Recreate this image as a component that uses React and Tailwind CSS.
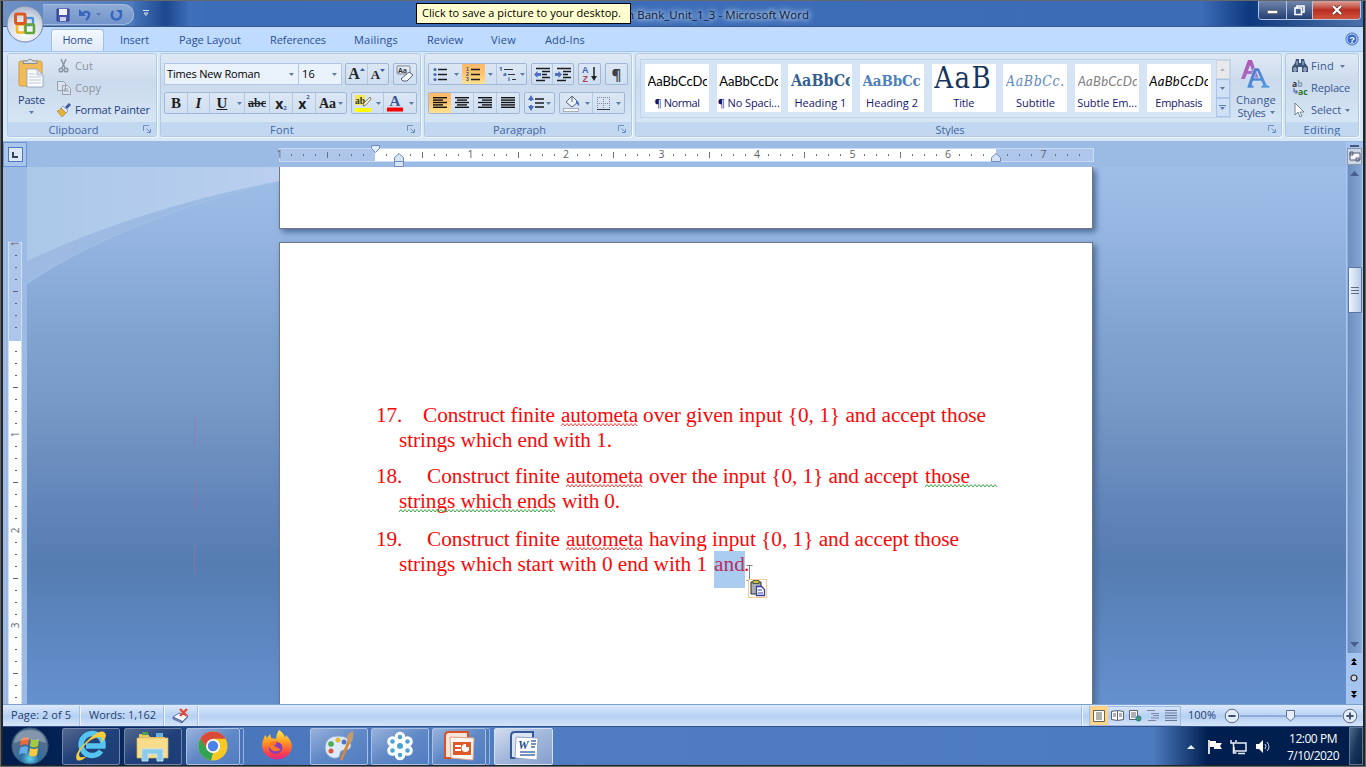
import React, { useLayoutEffect, useRef } from "react";

/* Text set to a given width by adjusting the letter spacing. */
function Fit({ w, className = "", children }) {
  const ref = useRef(null);
  useLayoutEffect(() => {
    const el = ref.current;
    el.style.letterSpacing = "0px";
    el.style.width = "auto";
    const natural = el.getBoundingClientRect().width;
    el.style.letterSpacing = (w - natural) / el.textContent.length + "px";
    el.style.width = w + "px";
  }, [w, children]);
  return (
    <span ref={ref} className={"inline-block shrink-0 whitespace-pre " + className}>
      {children}
    </span>
  );
}

function Down({ className = "" }) {
  return (
    <svg width="5" height="3" viewBox="0 0 5 3" className={"shrink-0 " + className}>
      <path d="M0 0h5L2.5 3z" fill="#5b7ba8" />
    </svg>
  );
}

function Group({ className, title, tw, launcher, children }) {
  return (
    <section className={"flex h-[84px] shrink-0 flex-col overflow-hidden rounded-[3px] border border-[#b4c9e2] bg-linear-to-b from-[#dfe9f5] from-0% via-[#cbdaec] via-35% to-[#dbeaf8] shadow-[1px_1px_0_#eef8ff] " + className}>
      <div className="flex h-[68px] shrink-0">{children}</div>
      <div className="flex h-[14px] items-center bg-[#c1d8f0] text-[#4566a2]">
        <div className="flex grow justify-center pt-px leading-[14px]">
          <Fit w={tw}>{title}</Fit>
        </div>
        {launcher && (
          <div className="w-[17px]">
            <svg width="9" height="9" viewBox="0 0 9 9" fill="none" stroke="#6f91bd" className="ml-1">
              <path d="M.5 6V.5H6M3.500 3.500l3.500 3.500M7.500 4v3.500H4" />
            </svg>
          </div>
        )}
      </div>
    </section>
  );
}

const box = "flex h-[22px] shrink-0 items-center rounded-[2px] border border-[#a0b7d8] bg-linear-to-b from-[#dce7f4] to-[#cfdff1] ";
const cell = "flex h-5 shrink-0 items-center justify-center ";

function Lines({ rows }) {
  return (
    <svg width="16" height="14" viewBox="0 0 16 14">
      {rows.map(([x, w], i) => (
        <rect key={i} x={x} y={1 + i * 2.4} width={w} height="1.4" fill="#101216" />
      ))}
    </svg>
  );
}

const full = [[1, 14], [1, 14], [1, 14], [1, 14], [1, 14]];
const left = [[1, 14], [1, 10], [1, 14], [1, 10], [1, 14]];
const center = [[1, 14], [3, 10], [1, 14], [3, 10], [1, 14]];
const right = [[1, 14], [5, 10], [1, 14], [5, 10], [1, 14]];

function ListIcon({ numbered }) {
  return (
    <svg width="15" height="15" viewBox="0 0 15 15">
      {[2, 7, 12].map((y, i) =>
        numbered ? (
          <text key={y} x="0" y={y + 2.3} fontSize="5" fontWeight="bold" fill="#294f93" fontFamily="Liberation Sans">{i + 1}</text>
        ) : (
          <circle key={y} cx="2" cy={y + 0.5} r="1.6" fill="#4c6cb0" />
        )
      )}
      <path d="M5 2.500h9M5 7.500h9M5 12.500h9" stroke="#1c1d20" strokeWidth="1.300" />
    </svg>
  );
}

function IndentIcon({ into }) {
  return (
    <svg width="17" height="15" viewBox="0 0 17 15">
      <path d="M2 1.500h14M8 4.500h8M8 7.500h5M8 10.500h8M2 13.500h9" stroke="#1b1c20" strokeWidth="1.600" />
      {into ? <path d="M7 7.500 3.500 4v2H0v3h3.500v2z" fill="#4c6fc0" /> : <path d="M0 7.500 3.500 4v2H7v3H3.500v2z" fill="#4c6fc0" />}
    </svg>
  );
}

function Clipboard() {
  return (
    <Group className="w-[150px]" title="Clipboard" tw={50} launcher>
      <div className="flex w-[47px] flex-col items-center pt-1">
        <svg width="28" height="31" viewBox="0 0 28 31">
          <rect x="1" y="3" width="23" height="25" rx="2" fill="#f0bb58" stroke="#cf9a40" />
          <path d="M5 5.500V3h4q3-3.500 6 0h4v2.500z" fill="#d8dde4" stroke="#747b87" strokeWidth=".8" />
          <path d="M9 11h10l6 6v12H9z" fill="#fbfdff" stroke="#8d9cb8" strokeWidth=".8" />
          <path d="M19 11v6h6zM11 16h6M11 19h12M11 22h12M11 25h12" fill="#dbe4f1" stroke="#a7b7d0" strokeWidth=".8" />
        </svg>
        <Fit w={27} className="mt-0.5 leading-[18px] text-[#1c3e7c]">Paste</Fit>
        <Down className="mt-[2px]" />
      </div>
      <div className="flex flex-col pt-px pl-0.5">
        <div className="flex h-[22px] items-center gap-1 text-[#8d939c]">
          <svg width="14" height="16" viewBox="0 0 14 16" fill="none" stroke="#8d95a2" strokeWidth="1.500">
            <path d="M4 1l4 9M9 1L5 10" /><circle cx="4" cy="12" r="1.800" /><circle cx="9" cy="12" r="1.800" />
          </svg>
          <Fit w={18}>Cut</Fit>
        </div>
        <div className="flex h-[22px] items-center gap-1 text-[#8d939c]">
          <svg width="14" height="14" viewBox="0 0 14 14" fill="#dde3ec" stroke="#98a2b2">
            <path d="M.5.500h6l2 2v7h-8zM5.500 4.500h5l3 3v6h-8zM7 8h4M7 10h5" />
          </svg>
          <Fit w={26}>Copy</Fit>
        </div>
        <div className="flex h-[22px] items-center gap-1 text-[#1c3e7c]">
          <svg width="14" height="14" viewBox="0 0 14 14">
            <path d="M12 0l2 2-4 4-2-2z" fill="#41569b" />
            <path d="M6 3l5 5-2 2-5-5z" fill="#e3e5f0" stroke="#6c739a" strokeWidth=".6" />
            <path d="M4 5l5 5-4 4-5-6q3 0 4-3z" fill="#e4b43b" stroke="#a87a1c" strokeWidth=".6" />
          </svg>
          <Fit w={75}>Format Painter</Fit>
        </div>
      </div>
    </Group>
  );
}

function FontGroup() {
  return (
    <Group className="w-[261px]" title="Font" tw={24} launcher>
      <div className="flex flex-col gap-[7px] pt-[9px] pl-[3px]">
        <div className="flex">
          <div className="flex h-[22px] w-[135px] items-center border border-[#b0c8e6] bg-[#eaf2fb] pr-1 pl-[2px] text-black">
            <Fit w={93}>Times New Roman</Fit><span className="grow" /><Down />
          </div>
          <div className="flex h-[22px] w-[43px] items-center border border-l-0 border-[#b0c8e6] bg-[#eaf2fb] pr-1 pl-[3px] text-black">
            <Fit w={13}>16</Fit><span className="grow" /><Down />
          </div>
          <div className={box + "ml-[3px] w-[44px] font-['Liberation_Serif',serif] font-bold text-[#23262c]"}>
            <div className={cell + "w-[22px] border-r border-[#b5c8e2] text-[16px]"}>A<svg width="5" height="14" viewBox="0 0 5 14"><path d="M0 4h5L2.500 1z" fill="#3c5fa8" /></svg></div>
            <div className={cell + "w-5 pt-0.5 text-[13px]"}>A<svg width="5" height="14" viewBox="0 0 5 14"><path d="M0 1h5L2.500 4z" fill="#3c5fa8" /></svg></div>
          </div>
          <div className={box + "ml-1 w-6 justify-center"}>
            <svg width="18" height="18" viewBox="0 0 18 18">
              <rect x="1" y="1" width="13" height="8" rx="1" fill="#e8edf5" stroke="#7b8796" />
              <text x="2" y="7.500" fontSize="7" fontWeight="bold" fill="#2c3340" fontFamily="Open Sans">Aa</text>
              <path d="M13 7l4 3-6 6H7l-2-2z" fill="#f8f9fb" stroke="#586070" />
            </svg>
          </div>
        </div>
        <div className="flex">
          <div className={box + "w-[183px] font-['Liberation_Serif',serif] text-[15px] font-bold text-[#1d1f24]"}>
            <div className={cell + "w-[23px] border-r border-[#b5c8e2]"}>B</div>
            <div className={cell + "w-[22px] border-r border-[#b5c8e2] italic"}>I</div>
            <div className={cell + "w-[24px] underline"}>U</div>
            <div className={cell + "w-[11px] border-r border-[#b5c8e2]"}><Down /></div>
            <div className={cell + "w-[25px] border-r border-[#b5c8e2] text-[12px] line-through"}>abc</div>
            <div className={cell + "w-[23px] border-r border-[#b5c8e2] font-['Open_Sans',sans-serif] text-[14px]"}>x<span className="self-end text-[6px] text-[#3c5fa8]">2</span></div>
            <div className={cell + "w-[23px] border-r border-[#b5c8e2] font-['Open_Sans',sans-serif] text-[14px]"}>x<span className="self-start text-[6px] text-[#3c5fa8]">2</span></div>
            <div className={cell + "w-[30px] gap-0.5 text-[14px]"}>Aa<Down /></div>
          </div>
          <div className={box + "ml-1 w-[66px]"}>
            <div className={cell + "w-[22px]"}>
              <svg width="17" height="17" viewBox="0 0 17 17">
                <rect x="0" y="0" width="10" height="10" fill="#f5e850" />
                <text x="0" y="8.500" fontSize="9.500" fontWeight="bold" fill="#30343b" fontFamily="Liberation Serif">ab</text>
                <path d="M15 2l1 2-5 6-3 1 1-3z" fill="#f7f0d8" stroke="#6a6455" strokeWidth=".8" />
                <rect x="0" y="13" width="16" height="4" fill="#ff0" />
              </svg>
            </div>
            <div className={cell + "w-[10px] border-r border-[#b5c8e2]"}><Down /></div>
            <div className={cell + "w-[22px]"}>
              <svg width="16" height="18" viewBox="0 0 16 18">
                <text x="2.500" y="12" fontSize="15" fontWeight="bold" fill="#3a5795" fontFamily="Liberation Serif">A</text>
                <rect x="0" y="13.500" width="16" height="4" fill="#f00" />
              </svg>
            </div>
            <div className={cell + "w-[10px]"}><Down /></div>
          </div>
        </div>
      </div>
    </Group>
  );
}

function ParagraphGroup() {
  const on = "bg-linear-to-b from-[#fbb96a] via-[#fdc36e] to-[#ffe391] ";
  return (
    <Group className="w-[208px]" title="Paragraph" tw={53} launcher>
      <div className="flex flex-col gap-[7px] pt-[9px] pl-[3px]">
        <div className="flex gap-1">
          <div className={box + "w-[99px]"}>
            <div className={cell + "w-[22px]"}><ListIcon /></div>
            <div className={cell + "w-[11px]"}><Down /></div>
            <div className={cell + on + "w-[23px]"}><ListIcon numbered /></div>
            <div className={cell + "w-[12px] border-r border-[#b5c8e2]"}><Down /></div>
            <div className={cell + "w-[21px]"}>
              <svg width="17" height="16" viewBox="0 0 17 16">
                <path d="M5 3.500h9M9 8.500h7M13 13.500h4" stroke="#333" strokeWidth="1.200" />
                <g fontSize="6" fontWeight="bold" fill="#294f93" fontFamily="Open Sans"><text x="0" y="5">1</text><text x="4" y="10">a</text><text x="9" y="15">i</text></g>
              </svg>
            </div>
            <div className={cell + "w-[8px]"}><Down /></div>
          </div>
          <div className={box + "w-[43px]"}>
            <div className={cell + "w-[21px] border-r border-[#b5c8e2]"}><IndentIcon /></div>
            <div className={cell + "w-[20px]"}><IndentIcon into /></div>
          </div>
          <div className={box + "w-[23px] justify-center"}>
            <svg width="17" height="18" viewBox="0 0 17 18">
              <g fontSize="9" fontWeight="bold" fontFamily="Liberation Sans"><text x="1" y="8" fill="#4263a9">A</text><text x="1.500" y="16.500" fill="#ad4250">Z</text></g>
              <path d="M13 2v12" stroke="#222" strokeWidth="1.500" /><path d="M10 11h6l-3 5z" fill="#222" />
            </svg>
          </div>
          <div className={box + "w-[23px] justify-center text-[15px] font-bold text-[#3d4148]"}>¶</div>
        </div>
        <div className="flex gap-1">
          <div className={box + "w-[92px]"}>
            <div className={cell + on + "w-[22px]"}><Lines rows={left} /></div>
            <div className={cell + "w-[23px] border-r border-[#b5c8e2]"}><Lines rows={center} /></div>
            <div className={cell + "w-[23px] border-r border-[#b5c8e2]"}><Lines rows={right} /></div>
            <div className={cell + "w-[22px]"}><Lines rows={full} /></div>
          </div>
          <div className={box + "w-[31px] justify-center gap-px"}>
            <svg width="17" height="16" viewBox="0 0 17 16">
              <path d="M3 3v3M3 10v3" stroke="#4c6fc0" strokeWidth="2" /><path d="M0 5 3 0l3 5zM0 11l3 5 3-5z" fill="#4c6fc0" />
              <path d="M7 4h9M7 8h9M7 12h9" stroke="#1b1c20" strokeWidth="1.500" />
            </svg>
            <Down />
          </div>
          <div className={box + "w-[66px]"}>
            <div className={cell + "w-[23px]"}>
              <svg width="17" height="17" viewBox="0 0 17 17">
                <path d="M3 7l6-6 6 6-6 5z" fill="#eef2f8" stroke="#5c6677" /><path d="M9 1v6" stroke="#5c6677" />
                <path d="M13 5q4 2 3 6l-3-3z" fill="#4e75b5" /><rect x="0.500" y="13.500" width="15" height="3" fill="#f4f5f8" stroke="#8f98a6" strokeWidth=".7" />
              </svg>
            </div>
            <div className={cell + "w-[10px] border-r border-[#b5c8e2]"}><Down /></div>
            <div className={cell + "w-[21px]"}>
              <svg width="13" height="13" viewBox="0 0 13 13" fill="none">
                <path d="M.5 0v13M6.500 0v13M12.500 0v13M0 .5h13M0 6.500h13" stroke="#7884a0" strokeDasharray="1 1" /><path d="M0 12.500h13" stroke="#343a46" />
              </svg>
            </div>
            <div className={cell + "w-[9px]"}><Down /></div>
          </div>
        </div>
      </div>
    </Group>
  );
}

const slab = "font-['DejaVu_Serif_Condensed','DejaVu_Serif',serif] ";
const plain = "font-['Lato','Open_Sans',sans-serif] text-[13px] ";
const styles = [
  ["AaBbCcDc", 61, plain + "text-black", "¶ Normal", 45],
  ["AaBbCcDc", 61, plain + "text-black", "¶ No Spaci...", 62],
  ["AaBbCc", 63, slab + "text-[16px] font-bold text-[#365f91]", "Heading 1", 52],
  ["AaBbCc", 58, slab + "text-[15px] font-bold text-[#4f81bd]", "Heading 2", 52],
  ["AaB", 58, slab + "text-[29px] text-[#17365d]", "Title", 21],
  ["AaBbCc.", 59, slab + "text-[14px] italic text-[#5f8ac1]", "Subtitle", 39],
  ["AaBbCcDc", 61, plain + "italic text-[#808080]", "Subtle Em...", 60],
  ["AaBbCcDc", 61, plain + "italic text-black", "Emphasis", 47],
];

function StylesGroup() {
  return (
    <Group className="w-[647px]" title="Styles" tw={29} launcher>
      <div className="mt-[5px] ml-1 flex h-[59px] w-[591px] border border-[#bdd3ee] bg-[#d6e5f6]">
        <div className="flex gap-[7.7px] pt-1 pl-1">
          {styles.map(([sample, w, cls, name, nw], i) => (
            <div key={i} className="flex h-12 w-16 flex-col items-center overflow-hidden bg-white">
              <div className={"flex h-[31px] w-[59px] shrink-0 items-center overflow-hidden " + (name === "Title" ? "pb-1" : "pt-0.5")}>
                <Fit w={w} className={"leading-[28px] " + cls}>{sample}</Fit>
              </div>
              <Fit w={nw} className="leading-[16px] text-[#15156c]">{name}</Fit>
            </div>
          ))}
        </div>
        <div className="ml-[5px] flex flex-col">
          <div className="flex h-[19px] w-[14px] items-center justify-center border border-[#cfd5dc] bg-[#e7e9ed]"><svg width="5" height="3" viewBox="0 0 5 3"><path d="M0 3h5L2.500 0z" fill="#aeb4bd" /></svg></div>
          <div className="flex h-[19px] w-[14px] items-center justify-center border border-[#a9c5ea] bg-[#d0e1f7]"><Down /></div>
          <div className="flex h-[19px] w-[14px] flex-col items-center justify-center gap-px border border-[#a9c5ea] bg-[#d0e1f7]"><span className="h-px w-[7px] bg-[#5b7ba8]" /><Down /></div>
        </div>
      </div>
      <div className="flex w-[49px] flex-col items-center pt-[5px] pl-px text-[#36568f]">
        <svg width="32" height="30" viewBox="0 0 32 30">
          <defs><linearGradient id="ca" x2="1" y2="1"><stop stopColor="#b448a5" /><stop offset="1" stopColor="#9c85d6" /></linearGradient><linearGradient id="cb" x2="1" y2="1"><stop stopColor="#4f6fc9" /><stop offset="1" stopColor="#54a3e4" /></linearGradient></defs>
          <path d="M1 20 8 1h4l7 19h-4l-2-5H7l-2 5zM8 12h4l-2-6z" fill="url(#ca)" fillRule="evenodd" />
          <path d="M7 28l7-19h5l8 17 3 1v2h-9v-2l2-1-2-4h-8l-1 4 2 1v2H7zM14 19h6l-3-7z" fill="url(#cb)" stroke="#e4ecf8" strokeWidth=".5" fillRule="evenodd" />
        </svg>
        <Fit w={40} className="mt-[4px] leading-[13px]">Change</Fit>
        <div className="flex items-center gap-1 leading-[13px]"><Fit w={28}>Styles</Fit><Down /></div>
      </div>
    </Group>
  );
}

function Editing() {
  return (
    <Group className="w-[74px]" title="Editing" tw={37}>
      <div className="flex flex-col pt-px pl-1.5 text-[#36568f]">
        <div className="flex h-[22px] items-center">
          <svg width="16" height="14" viewBox="0 0 16 14" className="mr-[3px]" fill="#3d5378"><path d="M4 0h3v4h2V0h3l1 4 3 4v5h-6V8H6v5H0V8l3-4z" /><path d="M2 9h2v3H2zM12 9h2v3h-2zM5 2v4M11 2v4" stroke="#d7e3f3" strokeWidth=".8" /></svg>
          <Fit w={23}>Find</Fit><Down className="ml-[6px]" />
        </div>
        <div className="flex h-[22px] items-center">
          <svg width="17" height="16" viewBox="0 0 17 16" className="mr-[2px]"><g fontSize="8.500" fontWeight="bold" fontFamily="Open Sans"><text x="0" y="6.800" fill="#2b3140">a<tspan fill="#8f98a8">b</tspan></text><text x="6" y="15" fill="#26752b">ac</text></g><path d="M2 8v4h3M3.500 10l2 2-2 2" fill="none" stroke="#3d5a9b" /></svg>
          <Fit w={39}>Replace</Fit>
        </div>
        <div className="flex h-[22px] items-center">
          <svg width="11" height="15" viewBox="0 0 11 15" className="mr-[6px] ml-[2px]"><path d="M1 0v12l3-3 2 5 2-1-2-4h4z" fill="#fff" stroke="#69778d" strokeWidth=".9" /></svg>
          <Fit w={30}>Select</Fit><Down className="ml-[4px]" />
        </div>
      </div>
    </Group>
  );
}

function Orb() {
  return (
    <svg width="38" height="38" viewBox="0 0 38 38" className="absolute top-[4px] left-[3px]">
      <defs><radialGradient id="orb" cx=".5" cy=".75" r=".75"><stop stopColor="#fff" /><stop offset=".65" stopColor="#d6dce7" /><stop offset="1" stopColor="#a3b2cb" /></radialGradient></defs>
      <circle cx="19" cy="19" r="18" fill="url(#orb)" stroke="#7288ae" />
      <g fill="none">
        <rect x="19.500" y="13" width="7.500" height="7" rx="1" stroke="#4d91d9" strokeWidth="2.400" />
        <rect x="11" y="19.500" width="8" height="8" rx="1" stroke="#f3b72a" strokeWidth="2.600" />
        <rect x="19.500" y="19.500" width="8.500" height="8.500" rx="1" stroke="#62a53b" strokeWidth="2.600" />
        <rect x="9.500" y="9" width="9.500" height="9.500" rx="1.500" stroke="#dc5a22" strokeWidth="3" />
      </g>
    </svg>
  );
}

function TitleBar() {
  return (
    <header className="relative flex h-[26px] shrink-0 items-start border-b border-[#3a5788] bg-linear-to-r from-[#6e90c6] from-0% via-[#3c6db8] via-15% to-[#3c6cb6]">
      <div className="mt-[3px] ml-[40px] flex h-[21px] w-[91px] items-center rounded-r-[10px] border border-l-0 border-[#a4bbdd] bg-linear-to-b from-[#8fabd6] to-[#7194ca] pl-[13px]">
        <svg width="14" height="14" viewBox="0 0 14 14"><path d="M1 1h12v12H1z" fill="#4854ac" stroke="#323c8d" /><path d="M3 1h8v6H3z" fill="#eff3fb" /><path d="M4 9h6v4H4z" fill="#cbd2e8" /></svg>
        <svg width="13" height="12" viewBox="0 0 13 12" className="ml-2"><path d="M4 5q4-4 7-1 1 3-3 7" fill="none" stroke="#3866bc" strokeWidth="2.400" /><path d="M1 0v7h7z" fill="#3866bc" /></svg>
        <Down className="ml-[5px]" />
        <svg width="13" height="12" viewBox="0 0 13 12" className="ml-[9px]"><path d="M3 2q-3 5 1 8 5 2 7-3V3" fill="none" stroke="#3866bc" strokeWidth="2.400" /><path d="M6 1h6v5z" fill="#3866bc" /></svg>
      </div>
      <div className="flex h-[25px] w-[32px] items-center bg-linear-to-r from-[#4473b8] to-[#1c488d] pl-[9px]">
        <svg width="6" height="7" viewBox="0 0 6 7" fill="none" stroke="#d4e2f6"><path d="M0 .5h6M1 3h4L3 5.500z" /></svg>
      </div>
      <div className="h-[25px] w-[22px] bg-linear-to-r from-[#1c488d] to-[#3c6cb6]" />
      <div className="ml-[439px] flex h-[25px] items-center pt-[3px] text-[#0d1c33] [text-shadow:0_0_5px_#dce8fa,0_0_7px_#b9cef0,0_0_9px_#9bb9e8]">
        <Fit w={182} className="text-[11.500px]">n Bank_Unit_1_3 - Microsoft Word</Fit>
      </div>
      <span className="grow" />
      <div className="flex h-[25px] bg-linear-to-r from-[#3c6cb6] via-[#0c397e] via-30% to-[#4b70a8] pl-[56px]">
        <div className="flex h-[19px] overflow-hidden rounded-b-[4px] border border-t-0 border-[#b5c6e0]">
          <div className="flex w-[28px] items-center justify-center border-r border-[#b5c6e0] bg-linear-to-b from-[#7286ab] to-[#233f72]"><span className="mt-1 h-[4px] w-[11px] border border-[#777] bg-white" /></div>
          <div className="flex w-[25px] items-center justify-center bg-linear-to-b from-[#7286ab] to-[#233f72]">
            <svg width="11" height="11" viewBox="0 0 11 11" fill="none" stroke="#fff" strokeWidth="1.600"><path d="M3 3V1h7v6H8" /><rect x="1" y="3" width="6.500" height="6.500" /></svg>
          </div>
          <div className="flex w-[48px] items-center justify-center border-l border-[#b5c6e0] bg-linear-to-b from-[#d9a19b] via-[#b92b1f] via-50% to-[#d0543d]">
            <svg width="12" height="10" viewBox="0 0 12 10"><path d="M2 1l8 8M10 1L2 9" stroke="#553033" strokeWidth="3.500" /><path d="M2 1l8 8M10 1L2 9" stroke="#fff" strokeWidth="2.200" /></svg>
          </div>
        </div>
      </div>
      <span className="w-[2px]" />
    </header>
  );
}

const tabs = [["Insert", 29, "ml-[16px]"], ["Page Layout", 62, "ml-[30px]"], ["References", 56, "ml-[29px]"], ["Mailings", 44, "ml-[28px]"], ["Review", 36, "ml-[29px]"], ["View", 25, "ml-[28px]"], ["Add-Ins", 40, "ml-[29px]"]];

function Tabs() {
  return (
    <nav className="flex h-6 shrink-0 items-center bg-[#bfdbff] text-[#2c4f94]">
      <div className="ml-[48px] flex h-[22px] w-[53px] items-center justify-center self-end rounded-t-[3px] border border-b-0 border-[#9fc0ec] bg-linear-to-b from-[#f4f9ff] to-[#dfeaf7]"><Fit w={30}>Home</Fit></div>
      {tabs.map(([t, w, m]) => <Fit key={t} w={w} className={"pt-[3px] " + m}>{t}</Fit>)}
      <span className="grow" />
      <svg width="14" height="14" viewBox="0 0 14 14" className="mr-[4px]"><circle cx="7" cy="7" r="6.200" fill="#3568c9" stroke="#7395ce" /><circle cx="7" cy="7" r="5" fill="none" stroke="#e7f0ff" strokeWidth=".8" /><text x="4.300" y="10.500" fontSize="9.500" fontWeight="bold" fill="#fff" fontFamily="Liberation Sans">?</text></svg>
    </nav>
  );
}

const hTicks = Array.from({ length: 68 }, (_, i) => i - 8);
const vTicks = Array.from({ length: 39 }, (_, i) => i - 8);

function HRuler() {
  return (
    <div className="relative flex h-[25px] grow items-center">
      <div className="relative ml-[252px] h-[14px] w-[815px] border border-[#c8dbf5] bg-[#adc6e9]">
        <div className="ml-[95px] h-3 w-[621px] bg-white" />
        <div className="absolute top-0 -left-[6.500px] flex h-3 items-center text-[10.500px] text-[#59616e]">
          {hTicks.map((n) => (
            <span key={n} className="flex w-[11.950px] items-center justify-center">
              {n === 0 || n === 52 ? null : n % 8 === 0 ? Math.abs(n / 8) : n % 4 === 0 ? <i className="h-[6px] w-px bg-[#6c7484]" /> : <i className="h-[2px] w-px bg-[#6c7484]" />}
            </span>
          ))}
        </div>
        <svg width="9" height="8" viewBox="0 0 9 8" className="absolute -top-[4px] left-[91px]"><path d="M.5.500h8v3l-4 4-4-4z" fill="#e2ebf8" stroke="#718cb9" /></svg>
        <svg width="10" height="15" viewBox="0 0 10 15" className="absolute top-[4px] left-[114px]"><path d="M.5 8.500V4.500l4.500-4 4.500 4v4zM.5 8.500h9v5h-9z" fill="#d6e4f7" stroke="#718cb9" /></svg>
        <svg width="10" height="9" viewBox="0 0 10 9" className="absolute top-[4px] left-[711px]"><path d="M.5 8.500V4.500l4.500-4 4.500 4v4z" fill="#d6e4f7" stroke="#718cb9" /></svg>
      </div>
    </div>
  );
}

function VRuler() {
  return (
    <div className="flex w-6 shrink-0 flex-col overflow-hidden bg-[#9cbbe4] pt-[75px] pl-[5px]">
      <div className="relative h-[470px] w-[14px] shrink-0 border border-[#cfe0f8] bg-[#adc6e9]">
        <div className="mt-[98px] h-[368px] w-3 bg-white" />
        <div className="absolute -top-[5px] left-[0.500px] flex w-3 flex-col items-center text-[10px] text-[#59616e]">
          {vTicks.map((n) => (
            <span key={n} className="flex h-[11.950px] shrink-0 items-center justify-center">
              {n === 0 ? null : n % 8 === 0 ? <b className="-rotate-90 font-normal">{Math.abs(n / 8)}</b> : n % 4 === 0 ? <i className="h-px w-[5px] bg-[#5a6170]" /> : <i className="h-px w-[2px] bg-[#5a6170]" />}
            </span>
          ))}
        </div>
      </div>
    </div>
  );
}

function Squiggle({ w, color }) {
  let d = "M0 3";
  for (let x = 2; x <= w; x += 2) d += `L${x} ${x % 4 ? 0.5 : 3}`;
  return <svg width={w} height="4" viewBox={`0 0 ${w} 4`} className="absolute top-[20px] left-0"><path d={d} fill="none" stroke={color} strokeWidth=".9" /></svg>;
}

function Marked({ w, line = w, color = "#e33", children }) {
  return <span className="relative inline-block h-[25px] shrink-0"><Fit w={w}>{children}</Fit><Squiggle w={line} color={color} /></span>;
}

const green = "#2f9a3c";

function Questions() {
  return (
    <div className="flex flex-col pt-[160px] pl-[96px] font-['Liberation_Serif',serif] text-[21.300px] leading-[25px] text-[#fb0808]">
      <div>
        <div className="flex h-[25px]"><Fit w={26}>17.</Fit><Fit w={132} className="ml-[21px]">Construct finite</Fit><span className="w-[6px]" /><Marked w={77}>autometa</Marked><Fit w={343} className="ml-[5px]">over given input {"{0, 1}"} and accept those</Fit></div>
        <div className="flex h-[25px] pl-[23px]"><Fit w={213}>strings which end with 1.</Fit></div>
      </div>
      <div className="mt-[11px]">
        <div className="flex h-[25px]"><Fit w={26}>18.</Fit><Fit w={133} className="ml-[25px]">Construct finite</Fit><span className="w-[6px]" /><Marked w={77}>autometa</Marked><Fit w={269} className="ml-[6px]">over the input {"{0, 1}"} and accept</Fit><span className="w-[7px]" /><Marked w={45} line={72} color={green}>those</Marked></div>
        <div className="flex h-[25px] pl-[23px]"><Marked w={157} color={green}>strings which ends</Marked><Fit w={58} className="ml-[6px]">with 0.</Fit></div>
      </div>
      <div className="mt-[13px]">
        <div className="flex h-[25px]"><Fit w={26}>19.</Fit><Fit w={133} className="ml-[25px]">Construct finite</Fit><span className="w-[6px]" /><Marked w={77}>autometa</Marked><Fit w={310} className="ml-[6px]">having input {"{0, 1}"} and accept those</Fit></div>
        <div className="flex h-[25px] pl-[23px]">
          <Fit w={308}>strings which start with 0 end with 1</Fit>
          <span className="relative -mt-px ml-[7px] flex h-[37px] w-[31px] bg-[#a9ccf0] leading-[27px] text-[#b63060]">
            <Fit w={31}>and</Fit>
            <svg width="21" height="39" viewBox="0 0 21 39" className="absolute top-[11px] left-[32px]">
              <path d="M.5 3.500h6M3.500 3.500v15M.5 18.500h6" fill="none" stroke="#7d8088" />
              <rect x="2.500" y="17.500" width="18" height="18" fill="#fff" stroke="#f9c98e" />
              <path d="M5 20h10v12H5z" fill="#a9adb2" stroke="#2a2c31" /><path d="M7 18.500h6v3H7z" fill="#cfc63a" stroke="#2a2c31" strokeWidth=".7" />
              <path d="M10.500 24.500h5l3 3v6h-8z" fill="#fff" stroke="#393d9c" strokeWidth="1.300" /><path d="M12 28h4M12 31h5" stroke="#393d9c" />
            </svg>
          </span>
          <span className="-ml-px">.</span>
        </div>
      </div>
    </div>
  );
}

function Canvas() {
  return (
    <main className="relative flex grow flex-col overflow-hidden bg-[linear-gradient(180deg,#9fbfe9_0,#95b5e0_13%,#80a3d0_31%,#7698c6_45%,#6083b8_65%,#557db2_74%,#6591cf_100%)] pl-[252px]">
      <svg width="252" height="120" viewBox="0 0 252 120" className="absolute top-0 left-0">
        <defs><linearGradient id="sw" x2="1"><stop stopColor="#abc8e9" /><stop offset="1" stopColor="#bacfef" /></linearGradient></defs>
        <path d="M0 0h252v14Q100 48 0 116z" fill="#9dbbe2" />
        <path d="M0 116Q100 50 252 14" fill="none" stroke="#a0bfe8" strokeWidth="1.500" />
        <path d="M0 0h252v14Q110 42 0 94z" fill="url(#sw)" />
      </svg>
      <div className="absolute top-[249px] left-[167px] flex flex-col gap-[33px]"><i className="h-[31px] w-px bg-[#a5709e]/60" /><i className="h-[31px] w-px bg-[#a5709e]/60" /><i className="h-[31px] w-px bg-[#a5709e]/60" /></div>
      <article className="h-[62px] w-[814px] shrink-0 border border-t-0 border-[#6e7580] bg-white shadow-[3px_3px_6px_#4a6a98]" />
      <article className="mt-[13px] h-[470px] w-[814px] shrink-0 border border-[#6e7580] bg-white shadow-[3px_3px_6px_#4a6a98]"><Questions /></article>
    </main>
  );
}

function ScrollBar() {
  return (
    <div className="flex w-[17px] shrink-0 flex-col items-center border-l border-[#a9c7ee] bg-[#a5c4f0] pt-[3px] pr-px">
      <span className="h-[2px] w-[9px] bg-[#47597c]" />
      <div className="mt-px flex h-[17px] w-[15px] items-center justify-center border border-[#8c97ab] bg-[#cdd6e5]">
        <svg width="12" height="12" viewBox="0 0 12 12" fill="#f5f5fb" stroke="#4f5b76"><path d="M1 2h10v7H1zM1 1h3v3H1zM7 7h3v3H7z" /></svg>
      </div>
      <div className="flex w-[15px] grow flex-col items-center border-x border-[#8fb0df] bg-linear-to-r from-[#6d8fc0] to-[#84a5d2] pt-[6px]">
        <svg width="9" height="5" viewBox="0 0 9 5"><path d="M0 5h9L4.500 0z" fill="#465f8c" /></svg>
        <div className="mt-[91px] flex h-[46px] w-[14px] shrink-0 flex-col items-center justify-center gap-[2px] rounded-[1px] border border-[#5d769f] bg-linear-to-r from-[#eef4fb] to-[#b4cbe9]">
          <i className="h-px w-2 bg-[#5f6c80]" /><i className="h-px w-2 bg-[#5f6c80]" /><i className="h-px w-2 bg-[#5f6c80]" />
        </div>
        <span className="grow" />
        <svg width="9" height="5" viewBox="0 0 9 5" className="mb-[6px]"><path d="M0 0h9L4.500 5z" fill="#465f8c" /></svg>
      </div>
      <div className="flex h-[51px] w-4 shrink-0 flex-col items-center justify-between bg-[#a5c4f0] pt-[5px] pr-px pb-[6px]">
        <svg width="6" height="7" viewBox="0 0 6 7"><path d="M0 3h6L3 0zM0 7h6L3 3z" /></svg>
        <svg width="8" height="8" viewBox="0 0 8 8"><circle cx="4" cy="4" r="3" fill="#d0d7e2" stroke="#222" strokeWidth="1.200" /></svg>
        <svg width="6" height="7" viewBox="0 0 6 7"><path d="M0 0h6L3 4zM0 4h6L3 7z" /></svg>
      </div>
    </div>
  );
}

function StatusBar() {
  const sep = "h-[20px] w-px bg-[#a4c0e8] shadow-[1px_0_0_#eaf3ff] ";
  const v = "flex h-[19px] w-[18px] items-center justify-center ";
  return (
    <footer className="flex h-[22px] shrink-0 items-center border-t border-[#7ca0d6] bg-linear-to-b from-[#dce9fb] from-0% via-[#b5d0f3] via-55% to-[#d5e5f9] text-[#24406f]">
      <Fit w={60} className="ml-2">Page: 2 of 5</Fit><span className={sep + "ml-[8px]"} />
      <Fit w={67} className="ml-[9px]">Words: 1,162</Fit><span className={sep + "ml-[7px]"} />
      <svg width="17" height="16" viewBox="0 0 17 16" className="ml-[8px]"><path d="M1 9l6-4 9 3-6 6z" fill="#f6f8fc" stroke="#6672a4" /><path d="M1 9v2l9 4v-2zM10 15l6-6" fill="#7b89bc" stroke="#4f5d98" strokeWidth=".7" /><path d="M8 1l7 7M15 1L8 8" stroke="#e34b34" strokeWidth="2.400" /></svg>
      <span className={sep + "ml-[8px]"} /><span className="grow" /><span className={sep + "mr-[7px]"} />
      <div className="flex h-5 items-center border border-[#9fbce6]">
        <div className={v + "bg-[#fbd389]"}><svg width="12" height="12" viewBox="0 0 12 12" fill="#fff" stroke="#6a6555"><path d="M.5.500h11v11H.5zM3 3h6M3 5h6M3 7h6M3 9h6" /></svg></div>
        <div className={v}><svg width="13" height="11" viewBox="0 0 13 11" fill="#fff" stroke="#58616f"><path d="M.5 1.500 6.500.500l6 1v8l-6 1-6-1zM6.500 1v9M2 4h3M2 6h3M8 4h3M8 6h3" /></svg></div>
        <div className={v}><svg width="13" height="12" viewBox="0 0 13 12" fill="#fff" stroke="#58616f"><path d="M.5.500h8v9h-8zM2 3h5M2 5h5M2 7h5" /><circle cx="9.500" cy="8.500" r="2.500" fill="#3d9b78" stroke="#32718b" /></svg></div>
        <div className={v}><svg width="13" height="11" viewBox="0 0 13 11" stroke="#7a869c"><path d="M0 .5h8M4 3.500h8M6 5.500h6M4 8h8M1 10.500h8" /></svg></div>
        <div className={v}><svg width="12" height="11" viewBox="0 0 12 11" stroke="#697791"><path d="M0 .5h12M0 3h12M0 5.500h12M0 8h12M0 10.500h12" /></svg></div>
      </div>
      <Fit w={28} className="ml-[7px]">100%</Fit>
      <svg width="136" height="18" viewBox="0 0 136 18" className="mr-[4px] ml-[7px]">
        <path d="M17 9h102" stroke="#6a87b9" />
        <g fill="#e2ebf8" stroke="#5a6985"><circle cx="9" cy="9" r="6.800" /><circle cx="127" cy="9" r="6.800" /></g>
        <path d="M5.500 9h7M123.500 9h7M127 5.500v7" stroke="#3e4d68" strokeWidth="1.800" />
        <path d="M63.500 3.500h8v7L67.500 14l-4-3.500z" fill="#e8effa" stroke="#5c7199" />
      </svg>
    </footer>
  );
}

const task = "flex h-[37px] shrink-0 items-center justify-center rounded-[2px] border ";
const pale = "border-[#a9c0e2] bg-linear-to-br from-[#98b2dc] via-[#6088c6] to-[#507dc1] ";
const dusk = "border-[#7085a8] bg-linear-to-br from-[#53688e] via-[#20407a] to-[#1c3d75] ";

function TaskBar() {
  return (
    <div className="flex h-[39px] shrink-0 items-center border-t border-[#34518a] bg-[linear-gradient(90deg,#001c4c_0,#0a2a60_150px,#4a76bb_240px,#507dc2_500px,#4d7bc0_1150px,#001f50_1205px,#001d4b_100%)]">
      <svg width="40" height="38" viewBox="0 0 40 38" className="ml-[7px]">
        <defs><radialGradient id="st" cx=".5" cy=".85"><stop stopColor="#61d5ee" /><stop offset=".5" stopColor="#2a6d9f" /><stop offset="1" stopColor="#526e8d" /></radialGradient></defs>
        <circle cx="20" cy="19" r="18" fill="url(#st)" stroke="#395b7d" />
        <path d="M11 12q4-3 8-1l-1 7q-5-2-8 1z" fill="#ed6936" /><path d="M21 12q4 2 8 0l-1 7q-4 3-8 0z" fill="#a3ca43" /><path d="M10 21q4-3 8-1l-1 7q-5-2-8 1z" fill="#64aee7" /><path d="M20 21q4 2 8 0l-1 7q-4 3-8 0z" fill="#fbc93b" />
        <path d="M4 16Q6 3 20 3t16 13Q20 9 4 16z" fill="#fff" opacity=".28" />
      </svg>
      <div className={task + dusk + "ml-[12px] w-[58px]"}>
        <svg width="32" height="34" viewBox="0 0 32 34"><path d="M26 22A11 11 0 1 1 28 17H11" fill="none" stroke="#55c4f0" strokeWidth="5.500" /><path d="M2 31Q-2 25 12 12T30 4q3 4-4 10 2-6-2-6-8 1-15 9T5 28q3 1 7-1-6 6-10 4z" fill="#f5cd3c" /></svg>
      </div>
      <div className={task + dusk + "ml-[4px] w-[58px]"}>
        <svg width="34" height="34" viewBox="0 0 34 34"><path d="M3 5h9l2 3h15v18H3z" fill="#e4c565" /><path d="M6 3h6v3H6z" fill="#45a255" /><path d="M20 4h7v4h-7z" fill="#6bb2da" /><path d="M1 9h31v20H1z" fill="#f6dc8b" stroke="#d8b55c" strokeWidth=".7" /><path d="M6 32V20h21v12h-6v-7h-9v7z" fill="#8ac9ea" stroke="#b9e4f6" /></svg>
      </div>
      <div className={task + pale + "ml-[4px] w-[54px]"}>
        <svg width="30" height="30" viewBox="0 0 30 30"><circle cx="15" cy="15" r="14.500" fill="#f9c926" /><path d="M2.400 7.800A14.500 14.500 0 0 1 27.600 7.800H15L9 19z" fill="#d94a38" /><path d="M2.400 7.800 9.200 18.500 15 22l-2 7.400A14.500 14.500 0 0 1 2.400 7.800z" fill="#31a352" /><circle cx="15" cy="15" r="7" fill="#fff" /><circle cx="15" cy="15" r="5.200" fill="#4a82e8" /></svg>
      </div>
      <span className="h-[37px] w-[4px] rounded-r-[2px] border border-l-0 border-[#96b3df]" />
      <div className="flex w-[66px] items-center justify-center">
        <svg width="32" height="34" viewBox="0 0 32 34">
          <defs><linearGradient id="ff" x1="1" y2="1"><stop stopColor="#fff04c" /><stop offset=".4" stopColor="#ff9b22" /><stop offset=".8" stopColor="#fa3d4e" /><stop offset="1" stopColor="#dd278b" /></linearGradient></defs>
          <path d="M18 1q5 3 6 8l1-3q6 6 6 12A15 14.500 0 1 1 3 9l1-3 2 3 3-4 1 4 5 1q0-5 3-9z" fill="url(#ff)" /><path d="M10 14q6-4 11 2 2 8-6 9-8-1-7-7 3 2 7-1-4 1-5-3z" fill="#8a3fb9" /><path d="M8 14q4-3 8-1-1 3-4 4 5 1 8 4-8 3-11-2z" fill="#ff7b23" />
        </svg>
      </div>
      <div className={task + pale + "w-[58px]"}>
        <svg width="34" height="34" viewBox="0 0 34 34"><path d="M3 18Q4 7 16 7q12 0 13 9 0 5-6 5-5 0-5 4 0 5-7 4-8-2-8-11z" fill="#dce9f7" stroke="#8ca9cd" /><circle cx="9" cy="15" r="2.800" fill="#54a657" /><circle cx="16" cy="11" r="2.500" fill="#e4b93a" /><circle cx="9" cy="22" r="2.500" fill="#d55a3f" /><circle cx="22" cy="13" r="2.500" fill="#5274c5" /><path d="M20 32l-2-2 8-19 3 1z" fill="#d48838" /><path d="M25 12q-1-8 6-10 1 7-2 12z" fill="#c69a6b" /></svg>
      </div>
      <div className={task + pale + "ml-[3px] w-[58px]"}>
        <svg width="30" height="32" viewBox="0 0 30 32" fill="#4aa3d7" stroke="#fff" strokeWidth="3"><circle cx="15" cy="7" r="3.800" /><circle cx="22.500" cy="11.500" r="3.800" /><circle cx="22.500" cy="20.500" r="3.800" /><circle cx="15" cy="25" r="3.800" /><circle cx="7.500" cy="20.500" r="3.800" /><circle cx="7.500" cy="11.500" r="3.800" /><circle cx="15" cy="16" r="4" strokeWidth="2" /></svg>
      </div>
      <div className={task + pale + "ml-[3px] w-[54px]"}>
        <svg width="32" height="34" viewBox="0 0 32 34"><path d="M2 29V7q0-4 4-4h19v6H9v20z" fill="#f8e5da" stroke="#d65126" strokeWidth="2" /><path d="M7 8l24 1-1 22-22-2z" fill="#fff7f2" stroke="#e2a58d" /><path d="M10 13h18v13H10z" fill="#df5a2b" /><path d="M12 16h6v2h-6zM12 20h6v2h-6z" fill="#fff" /><path d="M26 18h-3v-3a4 4 0 1 0 3 6z" fill="#fff" /></svg>
      </div>
      <span className="h-[37px] w-[4px] rounded-r-[2px] border border-l-0 border-[#96b3df]" />
      <div className={task + "ml-[4px] w-[59px] border-[#d5e1f2] bg-linear-to-br from-[#d3deee] via-[#a1b7da] to-[#879fce]"}>
        <svg width="32" height="34" viewBox="0 0 32 34"><path d="M3 29V7q0-4 4-4h18v6H9v20z" fill="#dbe5f4" stroke="#34579d" strokeWidth="2" /><path d="M8 8l22 1-1 22-22-2z" fill="#fff" stroke="#94a8cb" /><text x="10" y="20" fontSize="12" fontWeight="bold" fontStyle="italic" fill="#284b93" fontFamily="Liberation Serif">W</text><path d="M23 12h5M23 15h5M23 18h4M12 23h15M12 26h15" stroke="#4d6ca8" strokeWidth="1.600" /></svg>
      </div>
      <span className="grow" />
      <svg width="90" height="20" viewBox="0 0 90 20" className="mr-[13px]">
        <path d="M4 13h8L8 9z" fill="#e9f1fc" />
        <path d="M26 4v14" stroke="#eee" strokeWidth="1.800" /><path d="M27 5h6v2h6l-2 3 2 3h-8v-2h-4z" fill="#fff" />
        <g fill="none" stroke="#e9edf4" strokeWidth="1.500"><path d="M54 7h9v8H51v-4M55 17.500h7" /><path d="M48 4v3h5V4M50.500 7v10h3" /></g>
        <path d="M73 8h3l4-4v13l-4-4h-3z" fill="#fff" /><path d="M82 8q2 2 0 5M84 6q4 5 0 9" fill="none" stroke="#d5deeb" />
      </svg>
      <div className="flex w-[54px] flex-col items-center pt-px text-[12px] leading-[17px] text-white"><Fit w={48}>12:00 PM</Fit><Fit w={52}>7/10/2020</Fit></div>
      <div className="ml-[9px] h-[38px] w-[14px] border border-[#5c7694] bg-linear-to-br from-[#4d6c89] via-[#17365b] to-[#092244]" />
    </div>
  );
}

export default function App() {
  return (
    <div className="flex h-[767px] w-[1366px] flex-col overflow-hidden border border-[#66686c] bg-[#22252a] pr-[2px] pb-px pl-[2px] font-['Open_Sans','Noto_Sans',sans-serif] text-[11px]">
      <div className="relative flex min-h-0 grow flex-col overflow-hidden">
        <TitleBar />
        <Tabs />
        <div className="flex h-[90px] shrink-0 gap-[3px] border-t border-[#a3c5ef] bg-[#d6e7f8] pt-[1px] pl-1">
          <Clipboard /><FontGroup /><ParagraphGroup /><StylesGroup /><Editing />
        </div>
        <div className="flex min-h-0 grow bg-[#9cbbe4] pt-px">
          <div className="flex min-w-0 grow flex-col">
            <div className="flex h-[25px] shrink-0">
              <div className="flex w-6 shrink-0 items-center justify-center border border-[#6b94d6] bg-[#a9c6ec]">
                <div className="flex h-[15px] w-[15px] items-center justify-center border border-[#5377b5] bg-[#dce8f8]"><i className="h-[6px] w-[6px] border-b-2 border-l-2 border-[#38445a]" /></div>
              </div>
              <HRuler />
            </div>
            <div className="flex min-h-0 grow"><VRuler /><Canvas /></div>
          </div>
          <ScrollBar />
        </div>
        <StatusBar />
        <TaskBar />
        <Orb />
        <div className="absolute top-[2px] left-[413px] flex h-[21px] w-[215px] items-center border border-black bg-[#ffffcf] pl-[5px] text-black"><Fit w={199}>Click to save a picture to your desktop.</Fit></div>
      </div>
    </div>
  );
}
